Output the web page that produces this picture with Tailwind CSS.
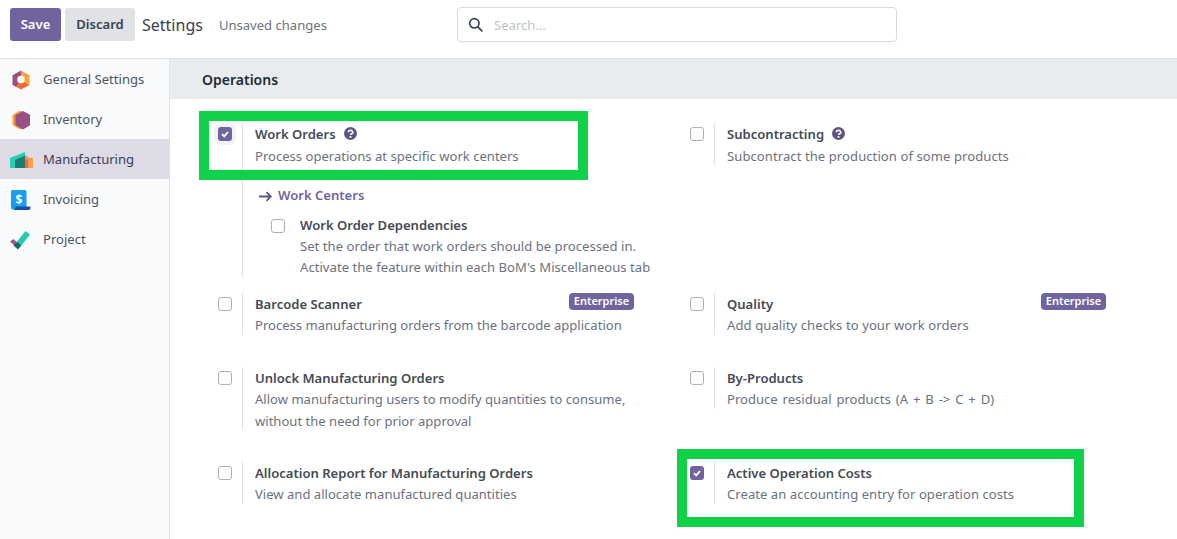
<!DOCTYPE html>
<html lang="en">
<head>
  <meta charset="UTF-8" />
  <title>Settings</title>
  <script src="https://cdn.jsdelivr.net/npm/@tailwindcss/browser@4"></script>
</head>
<body class="bg-white font-['Noto_Sans',sans-serif] text-[13.07px] text-[#434a55] overflow-hidden">
<div class="relative w-[1177px] h-[539px] overflow-hidden flex flex-col">

  <!-- control panel -->
  <header class="h-[59px] shrink-0 border-b border-[#dee2e6] flex items-start pt-[8px] pl-[10px]">
    <button class="h-[33px] w-[51px] pt-[1px] rounded-[3px] bg-[#71639e] text-white font-semibold">Save</button>
    <button class="h-[33px] w-[70px] pt-[1px] ml-[4px] rounded-[3px] bg-[#e0e2e6] text-[#374151] font-semibold">Discard</button>
    <span class="ml-[7px] h-[33px] leading-[35px] text-[16px] text-[#374151]">Settings</span>
    <span class="ml-[16px] h-[33px] leading-[35px] text-[#6b7280]">Unsaved changes</span>
    <div class="absolute left-[457px] top-[7px] w-[440px] h-[35px] border border-[#d8dadd] rounded-[4px] flex items-center pl-[10px]">
      <svg class="w-[15px] h-[15px]" viewBox="0 0 15 15" fill="none" stroke="#374151" stroke-width="1.7"><circle cx="6.3" cy="6.3" r="4.7"/><path d="M9.8 9.8l4 4" stroke-linecap="round"/></svg>
      <span class="ml-[11px] pt-[2px] text-[#c0c4ca]">Search...</span>
    </div>
  </header>

  <div class="flex flex-1 min-h-0">
    <!-- sidebar -->
    <aside class="w-[170px] shrink-0 bg-[#f9fafb] border-r border-[#dee2e6]">
      <div class="h-[40px] pt-[2px] flex items-center text-[#4b5563]">
        <span class="w-[43px] flex justify-center">
          <svg class="w-[22px] h-[22px] -ml-[2px]" viewBox="0 0 22 22"><path d="M11 1.500l8.500 4.800v9.600L11 11z" fill="#f9a23c"/><path d="M11 1.500L2.500 6.300v9.600L6.500 18 11 11z" fill="#985184"/><path d="M19.500 15.900L11 20.500 6.500 18 11 11z" fill="#f26b26"/><circle cx="11" cy="10.500" r="3.800" fill="#f9fafb"/></svg>
        </span>General Settings
      </div>
      <div class="h-[40px] pt-[2px] flex items-center text-[#4b5563]">
        <span class="w-[43px] flex justify-center">
          <svg class="w-[22px] h-[22px] -ml-[2px]" viewBox="0 0 22 22"><path d="M10 1.500l8 4.500v10l-8 4.500-7.500-4.500V6z" fill="#f9a23c"/><path d="M13 2l7 3.800v10.400L13 20.500l-7-4.100V6z" fill="#985184"/><path d="M10 3L6 6v10.400l-1.500-1V6.500z" fill="#f26b26"/></svg>
        </span>Inventory
      </div>
      <div class="h-[40px] pt-[2px] flex items-center bg-[#dedbe7] text-[#374151]">
        <span class="w-[43px] flex justify-center">
          <svg class="w-[24px] h-[17px]" viewBox="0 0 24 17"><path d="M0 6L15 0v16H0z" fill="#25d0b4"/><path d="M5 8l10-4.500V16H5z" fill="#1f7a70"/><path d="M15 3l5 3v10h-5z" fill="#f98f7d"/><path d="M19 6h4v10h-4z" fill="#f9a23c"/><path d="M15 8l3-1v9h-3z" fill="#f26b26"/></svg>
        </span>Manufacturing
      </div>
      <div class="h-[40px] pt-[2px] flex items-center text-[#4b5563]">
        <span class="w-[43px] flex justify-center">
          <svg class="w-[21px] h-[21px] -ml-[2px]" viewBox="0 0 21 21"><path d="M1 1.500A1.500 1.500 0 012.500 0H15a1.500 1.500 0 011.500 1.500V18H19v1.500H3A2 2 0 011 17.500z" fill="#1a9cf0"/><path d="M6 16.500h14.500v1.500a2 2 0 01-2 2H4z" fill="#1a4fa0"/><text x="9" y="13.500" text-anchor="middle" font-size="12" font-weight="700" fill="#fff" font-family="Noto Sans">$</text></svg>
        </span>Invoicing
      </div>
      <div class="h-[40px] pt-[2px] flex items-center text-[#4b5563]">
        <span class="w-[43px] flex justify-center">
          <svg class="w-[21px] h-[19px] -ml-[2px]" viewBox="0 0 21 19"><path d="M15.500 0L20 3.500 9 17.500 5 13z" fill="#25c9ad"/><path d="M0 10.500l3.500-2.500 4 4-3 2.500z" fill="#985184"/><path d="M3.500 14.500l4-3.500 3.500 3.500-3 4z" fill="#17685f"/></svg>
        </span>Project
      </div>
    </aside>

    <!-- settings -->
    <main class="flex-1 min-w-0">
      <div class="h-[40px] bg-[#e9ecef] pl-[32px] flex items-center text-[14px] font-semibold text-[#1f2937]">Operations</div>

      <div class="grid grid-cols-[472px_472px] pl-[47px] pt-[24px]">
        <!-- row 1 -->
        <div class="h-[170px] flex">
          <div class="w-[25px] pl-[1px] pt-[4px]"><span class="block w-[14px] h-[14px] rounded-[3px] bg-[#71639e] ring-[4px] ring-[#f3f3f7] flex items-center justify-center"><svg class="w-[10px] h-[10px]" viewBox="0 0 10 10" fill="none" stroke="#fff" stroke-width="1.800"><path d="M2 5.200l2.200 2.200L8 3"/></svg></span></div>
          <div class="h-[154px] border-l border-[#dee2e6] pl-[12px]">
            <div class="h-[22px] pt-[1px] leading-[20px] flex items-start font-semibold">Work Orders
              <svg class="w-[13px] h-[13px] ml-[8px] mt-[3px]" viewBox="0 0 13 13"><circle cx="6.500" cy="6.500" r="6.500" fill="#5f5285"/><path d="M4.300 5.200a2.200 1.900 0 113.300 1.600c-.8.4-1.100.7-1.100 1.300" fill="none" stroke="#fff" stroke-width="1.700"/><rect x="5.600" y="9" width="1.800" height="1.800" fill="#fff"/></svg>
            </div>
            <div class="h-[22px] leading-[22px] text-[#6b7280]">Process operations at specific work centers</div>
            <div class="h-[28px] mt-[15px] pl-[4px] flex items-center font-semibold text-[#71639e]">
              <svg class="w-[13px] h-[11px] mr-[6px]" viewBox="0 0 13 11" fill="none" stroke="#5f5285" stroke-width="1.800"><path d="M0 5.500h11.500M7.500 1.200l4.300 4.300-4.300 4.300"/></svg>Work Centers
            </div>
            <div class="flex mt-[4px]">
              <div class="w-[45px] pl-[16px] pt-[5px]"><span class="block w-[14px] h-[14px] rounded-[3px] border border-[#adb0b5] bg-white"></span></div>
              <div>
                <div class="h-[22px] leading-[22px] font-semibold">Work Order Dependencies</div>
                <div class="leading-[21px] text-[#6b7280] tracking-[0.04px]">Set the order that work orders should be processed in.<br>Activate the feature within each BoM's Miscellaneous tab</div>
              </div>
            </div>
          </div>
        </div>
        <div class="h-[170px] flex">
          <div class="w-[25px] pl-[1px] pt-[4px]"><span class="block w-[14px] h-[14px] rounded-[3px] border border-[#adb0b5] bg-white"></span></div>
          <div class="h-[42px] border-l border-[#dee2e6] pl-[12px]">
            <div class="h-[22px] pt-[1px] leading-[20px] flex items-start font-semibold">Subcontracting
              <svg class="w-[13px] h-[13px] ml-[8px] mt-[3px]" viewBox="0 0 13 13"><circle cx="6.500" cy="6.500" r="6.500" fill="#5f5285"/><path d="M4.300 5.200a2.200 1.900 0 113.300 1.600c-.8.4-1.100.7-1.100 1.300" fill="none" stroke="#fff" stroke-width="1.700"/><rect x="5.600" y="9" width="1.800" height="1.800" fill="#fff"/></svg>
            </div>
            <div class="h-[22px] leading-[22px] text-[#6b7280] tracking-[0.07px]">Subcontract the production of some products</div>
          </div>
        </div>

        <!-- row 2 -->
        <div class="h-[74px] flex">
          <div class="w-[25px] pl-[1px] pt-[4px]"><span class="block w-[14px] h-[14px] rounded-[3px] border border-[#adb0b5] bg-white"></span></div>
          <div class="relative h-[42px] w-[392px] border-l border-[#dee2e6] pl-[12px]">
            <div class="h-[21px] leading-[22px] font-semibold">Barcode Scanner</div>
            <div class="h-[22px] leading-[22px] text-[#6b7280]">Process manufacturing orders from the barcode application</div>
            <span class="absolute right-0 top-0 h-[17px] w-[65px] rounded-[4px] bg-[#71639e] text-white text-[11px] font-semibold leading-[16px] text-center">Enterprise</span>
          </div>
        </div>
        <div class="h-[74px] flex">
          <div class="w-[25px] pl-[1px] pt-[4px]"><span class="block w-[14px] h-[14px] rounded-[3px] border border-[#adb0b5] bg-white"></span></div>
          <div class="relative h-[42px] w-[392px] border-l border-[#dee2e6] pl-[12px]">
            <div class="h-[21px] leading-[22px] font-semibold">Quality</div>
            <div class="h-[22px] leading-[22px] text-[#6b7280] tracking-[0.08px]">Add quality checks to your work orders</div>
            <span class="absolute right-0 top-0 h-[17px] w-[65px] rounded-[4px] bg-[#71639e] text-white text-[11px] font-semibold leading-[16px] text-center">Enterprise</span>
          </div>
        </div>

        <!-- row 3 -->
        <div class="h-[95px] flex">
          <div class="w-[25px] pl-[1px] pt-[4px]"><span class="block w-[14px] h-[14px] rounded-[3px] border border-[#adb0b5] bg-white"></span></div>
          <div class="h-[63px] border-l border-[#dee2e6] pl-[12px]">
            <div class="h-[21px] leading-[22px] font-semibold">Unlock Manufacturing Orders</div>
            <div class="leading-[22px] text-[#6b7280]">Allow manufacturing users to modify quantities to consume,<br>without the need for prior approval</div>
          </div>
        </div>
        <div class="h-[95px] flex">
          <div class="w-[25px] pl-[1px] pt-[4px]"><span class="block w-[14px] h-[14px] rounded-[3px] border border-[#adb0b5] bg-white"></span></div>
          <div class="h-[42px] border-l border-[#dee2e6] pl-[12px]">
            <div class="h-[21px] leading-[22px] font-semibold">By-Products</div>
            <div class="h-[22px] leading-[22px] text-[#6b7280] [word-spacing:1.5px]">Produce residual products (A + B -&gt; C + D)</div>
          </div>
        </div>

        <!-- row 4 -->
        <div class="flex">
          <div class="w-[25px] pl-[1px] pt-[4px]"><span class="block w-[14px] h-[14px] rounded-[3px] border border-[#adb0b5] bg-white"></span></div>
          <div class="h-[42px] border-l border-[#dee2e6] pl-[12px]">
            <div class="h-[21px] leading-[22px] font-semibold">Allocation Report for Manufacturing Orders</div>
            <div class="h-[22px] leading-[22px] text-[#6b7280]">View and allocate manufactured quantities</div>
          </div>
        </div>
        <div class="flex">
          <div class="w-[25px] pl-[1px] pt-[4px]"><span class="block w-[14px] h-[14px] rounded-[3px] bg-[#71639e] flex items-center justify-center"><svg class="w-[10px] h-[10px]" viewBox="0 0 10 10" fill="none" stroke="#fff" stroke-width="1.800"><path d="M2 5.200l2.200 2.200L8 3"/></svg></span></div>
          <div class="h-[42px] border-l border-[#dee2e6] pl-[12px]">
            <div class="h-[21px] leading-[22px] font-semibold">Active Operation Costs</div>
            <div class="h-[22px] leading-[22px] text-[#6b7280] tracking-[0.04px]">Create an accounting entry for operation costs</div>
          </div>
        </div>
      </div>
    </main>
  </div>

  <!-- green highlight boxes drawn over the screenshot -->
  <div class="absolute left-[199px] top-[111px] w-[389px] h-[69px] border-[10px] border-[#10d248]"></div>
  <div class="absolute left-[677px] top-[449px] w-[407px] h-[78px] border-[10px] border-[#10d248]"></div>
</div>
</body>
</html>
